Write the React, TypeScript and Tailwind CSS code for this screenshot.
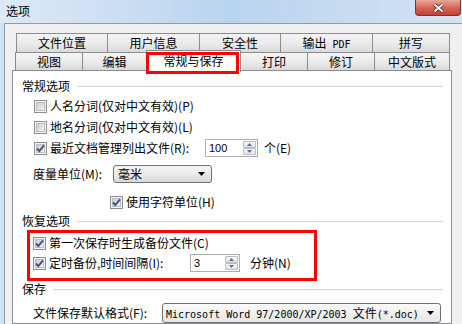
import React from "react";

function CheckBox({ checked }: { checked?: boolean }) {
  return (
    <div className="relative w-[13px] h-[13px] shrink-0 border border-[#8e8f8f] bg-[#f4f4f4] p-[1px]">
      <div className="w-full h-full border border-[#bdbdbd] bg-gradient-to-br from-[#cdcdcd] to-[#f4f4f4]" />
      {checked && (
        <svg className="absolute left-0 top-0" width="11" height="11" viewBox="0 0 11 11">
          <path d="M2 5.5 L4.3 8 L9 2.3" fill="none" stroke="#3b518f" strokeWidth="1.9" />
        </svg>
      )}
    </div>
  );
}

function SpinBtn({ up }: { up?: boolean }) {
  return (
    <div className="flex-1 flex items-center justify-center border border-[#b9bcc3] rounded-[1px] bg-gradient-to-b from-[#f7f7f7] to-[#dfe2e7]">
      <svg width="5" height="3" viewBox="0 0 5 3">
        <path d={up ? "M0 3 L2.5 0 L5 3Z" : "M0 0 L5 0 L2.5 3Z"} fill="#5a6f97" />
      </svg>
    </div>
  );
}

function Spin({ value, className }: { value: string; className: string }) {
  return (
    <div className={`flex h-[18px] border border-[#abadb3] bg-white ${className}`}>
      <div className="flex-1 pl-[3px] flex items-center text-[11px] font-['Liberation_Sans',sans-serif]">{value}</div>
      <div className="flex flex-col w-[15px] p-[1px]">
        <SpinBtn up />
        <SpinBtn />
      </div>
    </div>
  );
}

function Header({ label }: { label: string }) {
  return (
    <div className="flex items-center h-[16px] pl-[9px] pr-[8px]">
      <span className="text-[12px] leading-none">{label}</span>
      <div className="flex-1 h-px bg-[#d5d5cb] ml-[7px]" />
    </div>
  );
}

function Tab({ label, className }: { label: React.ReactNode; className: string }) {
  return (
    <div
      className={`h-full flex items-center justify-center border-l border-t border-r border-[#898c95] -ml-px first:ml-0 bg-gradient-to-b from-[#f4f4f4] via-[#ebebeb] to-[#dadada] text-[12px] leading-none ${className}`}
    >
      {label}
    </div>
  );
}

function Arrow() {
  return (
    <svg width="7" height="4" viewBox="0 0 7 4">
      <path d="M0 0 H7 L3.5 4Z" fill="#000" />
    </svg>
  );
}

export default function App() {
  return (
    <div className="w-[462px] h-[324px] overflow-hidden flex flex-col bg-[#d3e2f2] text-black font-['Noto_Sans_CJK_SC','Noto_Sans',sans-serif]">
      {/* Title bar */}
      <div className="relative h-[23px] shrink-0 flex items-center pl-[6px] bg-gradient-to-r from-[#dde9f6] via-[#b9d4ee] to-[#d3e3f3]">
        <span className="text-[12px] leading-none -mt-[1px]">选项</span>
        <div className="absolute right-[1px] top-0 w-[46px] h-[16px] rounded-b-[4px] border border-t-0 border-[#7d3329] bg-gradient-to-b from-[#e7a797] via-[#d4695a] to-[#c23f2e] flex items-center justify-center">
          <svg width="13" height="10" viewBox="0 0 13 10">
            <path d="M2.5 1.5 L10.5 8.5 M10.5 1.5 L2.5 8.5" stroke="#4a1a12" strokeWidth="3.6" />
            <path d="M2.5 1.5 L10.5 8.5 M10.5 1.5 L2.5 8.5" stroke="#ffffff" strokeWidth="2" />
          </svg>
        </div>
      </div>

      <div className="flex-1 flex min-h-0">
        <div className="w-[4px] shrink-0 bg-[#d3e2f2]" />
        <div className="flex-1 flex flex-col border-l border-t border-[#8e9bab] bg-[#f0f0f0] min-h-0">
          {/* Tab row 1 */}
          <div className="flex h-[19px] mt-[9px] ml-[11px]">
            <Tab label="文件位置" className="w-[92px]" />
            <Tab label="用户信息" className="w-[93px]" />
            <Tab label="安全性" className="w-[82px]" />
            <Tab
              label={
                <span>
                  输出<span className="ml-[6px] font-['DejaVu_Sans_Mono',monospace] text-[10px]">PDF</span>
                </span>
              }
              className="w-[93px]"
            />
            <Tab label="拼写" className="w-[78px]" />
          </div>
          {/* Tab row 2 */}
          <div className="flex h-[18px] ml-[10px] border-t border-[#898c95] w-[435px]">
            <Tab label="视图" className="w-[68px] border-t-0" />
            <Tab label="编辑" className="w-[65px] border-t-0" />
            <div className="relative z-10 -ml-px self-start -mt-[3px] h-[22px] w-[95px] flex items-center justify-center bg-white border-l border-t border-r border-[#898c95] text-[12px] leading-none pb-[2px]">
              常规与保存
              <div className="absolute left-[-1px] right-[1px] top-[1px] bottom-[-2px] border-[3px] border-[#ff0000]" />
            </div>
            <Tab label="打印" className="w-[68px] border-t-0" />
            <Tab label="修订" className="w-[68px] border-t-0" />
            <Tab label="中文版式" className="w-[76px] border-t-0" />
          </div>

          {/* Content panel */}
          <div className="ml-[7px] w-[440px] flex-1 bg-white border border-[#898c95] pt-[7px] text-[12px] leading-none">
            <Header label="常规选项" />

            <div className="flex items-center h-[20px] mt-[2px] ml-[21px] gap-[3px]">
              <CheckBox />
              <span>人名分词(仅对中文有效)(P)</span>
            </div>
            <div className="flex items-center h-[20px] mt-[1px] ml-[21px] gap-[3px]">
              <CheckBox />
              <span>地名分词(仅对中文有效)(L)</span>
            </div>
            <div className="flex items-center h-[20px] mt-[1px] ml-[21px]">
              <div className="w-[171px] flex items-center gap-[3px]">
                <CheckBox checked />
                <span>最近文档管理列出文件(R):</span>
              </div>
              <Spin value="100" className="w-[53px]" />
              <span className="ml-[6px]">个(E)</span>
            </div>

            <div className="flex items-center h-[20px] mt-[6px] ml-[20px]">
              <span className="w-[80px]">度量单位(M):</span>
              <div className="flex items-center w-[99px] h-[18px] rounded-[3px] border border-[#707070] bg-gradient-to-b from-[#f4f4f4] via-[#ebebeb] to-[#d9d9d9] pl-[4px] pr-[6px]">
                <span className="flex-1">毫米</span>
                <Arrow />
              </div>
            </div>

            <div className="flex items-center h-[20px] mt-[8px] ml-[97px] gap-[3px]">
              <CheckBox checked />
              <span>使用字符单位(H)</span>
            </div>

            <div className="mt-[1px]">
              <Header label="恢复选项" />
            </div>

            <div className="mt-[1px] ml-[14px] w-[290px] border-[3px] border-[#ff0000] pb-[5px] pl-[3px]">
              <div className="flex items-center h-[20px] gap-[3px]">
                <CheckBox checked />
                <span>第一次保存时生成备份文件(C)</span>
              </div>
              <div className="flex items-center h-[20px]">
                <div className="w-[157px] flex items-center gap-[3px]">
                  <CheckBox checked />
                  <span>定时备份,时间间隔(I):</span>
                </div>
                <Spin value="3" className="w-[50px]" />
                <span className="ml-[10px]">分钟(N)</span>
              </div>
            </div>

            <Header label="保存" />

            <div className="flex items-center h-[20px] mt-[6px] ml-[20px]">
              <span className="w-[129px]">文件保存默认格式(F):</span>
              <div className="flex items-center w-[279px] h-[20px] rounded-[3px] border border-[#707070] bg-gradient-to-b from-[#fbfbfb] to-[#e6e6e6] pl-[3px] pr-[6px]">
                <span className="flex-1 whitespace-pre font-['DejaVu_Sans_Mono',monospace] text-[10px]">
                  Microsoft Word 97/2000/XP/2003 <span className="font-['Noto_Sans_CJK_SC',sans-serif] text-[12px]">文件</span>(*.doc)
                </span>
                <Arrow />
              </div>
            </div>
          </div>
        </div>
      </div>
    </div>
  );
}
